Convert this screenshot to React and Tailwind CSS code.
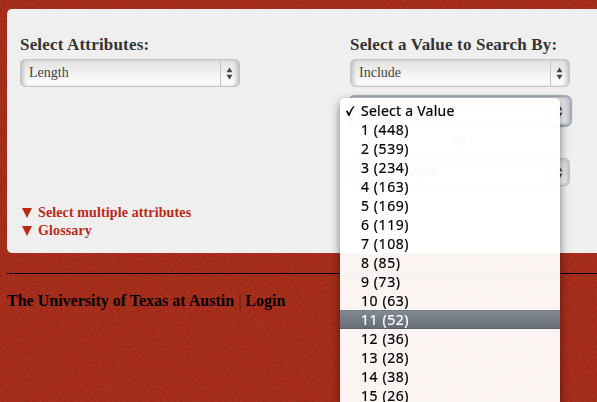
import React from "react";

const values = [
  "1 (448)", "2 (539)", "3 (234)", "4 (163)", "5 (169)", "6 (119)", "7 (108)", "8 (85)",
  "9 (73)", "10 (63)", "11 (52)", "12 (36)", "13 (28)", "14 (38)", "15 (26)",
];

function Texture() {
  return (
    <svg className="absolute inset-0 h-full w-full" aria-hidden="true">
      <filter id="grain" x="0" y="0" width="100%" height="100%" colorInterpolationFilters="sRGB">
        <feTurbulence type="fractalNoise" baseFrequency="0.4 0.55" numOctaves="3" seed="4" />
        <feColorMatrix values="0.12 0 0 0 0.585  0 0.12 0 0 0.115  0 0.04 0 0 0.085  0 0 0 0 1" />
      </filter>
      <rect width="100%" height="100%" filter="url(#grain)" />
    </svg>
  );
}

function Select({ label, focused }) {
  return (
    <div
      className={
        "flex h-7 w-[220px] rounded-[5px] border border-[#c4c4c4] bg-linear-to-b from-[#e2e2e2] to-white text-[14px] leading-[26px] text-[#444] " +
        (focused
          ? "rounded-[3px] shadow-[0_0_1px_1.5px_#9ba6b5,inset_4px_0_4px_-2px_#bbb,inset_-4px_0_4px_-2px_#bbb]"
          : "shadow-[inset_4px_0_4px_-2px_#bbb,inset_-4px_0_4px_-2px_#bbb]")
      }
    >
      <span className="flex-1 pl-2">{label}</span>
      <span className="flex w-[19px] items-center justify-center border-l border-[#c4c4c4] pr-px">
        <svg width="7" height="13" viewBox="0 0 7 13" fill="#444">
          <path d="M3.5 .5 6.5 5.3H.5ZM.5 7.7h6L3.5 12.5Z" />
        </svg>
      </span>
    </div>
  );
}

function Disclosure({ children }) {
  return (
    <div className="flex h-[18px] items-center">
      <svg className="mr-[6px] ml-[2px]" width="10" height="10" viewBox="0 0 10 10" fill="#bb2815">
        <path d="M0 0h10L5 10Z" />
      </svg>
      <span>{children}</span>
    </div>
  );
}

function Menu() {
  return (
    <ul className="absolute top-[98px] left-[340px] h-[320px] w-[220px] rounded-t-[5px] bg-white/95 pt-[3px] font-['Noto_Sans',sans-serif] text-[14px] leading-[19px] tracking-[0.58px] text-black shadow-[0_4px_10px_rgba(0,0,0,0.5)] backdrop-blur-[1px] [-webkit-text-stroke:0.2px_currentColor]">
      <li className="flex h-[19px] items-center tracking-[0.25px]">
        <svg className="mr-[5px] ml-[5px]" width="11" height="12" viewBox="0 0 11 12" fill="#000">
          <path d="M1 6.2 2.6 5.6 4 8.2C5.2 5.4 6.6 3 8.6 1L9.6 1.2C7.4 4.2 6 7.2 4.7 10.8L3.4 11Z" />
        </svg>
        <span>Select a Value</span>
      </li>
      {values.map((value) => (
        <li
          key={value}
          className={
            value === "11 (52)"
              ? "h-[19px] border-y border-t-[#747c84] border-b-[#59616b] bg-linear-to-b from-[#838a93] to-[#666d77] pl-[21px] leading-[17px] text-white"
              : "h-[19px] pl-[21px]"
          }
        >
          {value}
        </li>
      ))}
    </ul>
  );
}

export default function App() {
  return (
    <div className="relative h-[402px] w-[597px] overflow-hidden bg-[#a62d1a] font-['Liberation_Serif',serif]">
      <Texture />
      <main className="relative pt-[9px] pl-[7px]">
        <section className="flex h-[244px] rounded-l-[5px] bg-[#efefef] pl-[13px]">
          <div className="flex w-[330px] flex-col pt-[26px]">
            <h2 className="h-6 text-[17px] leading-5 font-bold tracking-[0.18px] text-[#333]">Select Attributes:</h2>
            <Select label="Length" />
            <div className="mt-[117px] text-[14px] leading-[18px] font-bold tracking-[0.12px] text-[#bb2815]">
              <Disclosure>Select multiple attributes</Disclosure>
              <Disclosure>Glossary</Disclosure>
            </div>
          </div>
          <div className="flex w-[220px] flex-col pt-[26px]">
            <h2 className="h-6 text-[17px] leading-5 font-bold tracking-[0.18px] whitespace-nowrap text-[#333]">Select a Value to Search By:</h2>
            <Select label="Include" />
            <div className="mt-[10px]"><Select label="Select a Value" focused /></div>
            <div className="h-[33px] pt-1 text-center text-[14px] text-[#333]">to</div>
            <Select label="Select a Value" />
          </div>
        </section>
        <footer className="mt-5 border-t border-black pt-[17px] text-[16px] leading-5 text-black">
          <strong>The University of Texas at Austin</strong>
          <span className="text-[#5e2118]"> | </span>
          <strong>Login</strong>
        </footer>
      </main>
      <Menu />
    </div>
  );
}
